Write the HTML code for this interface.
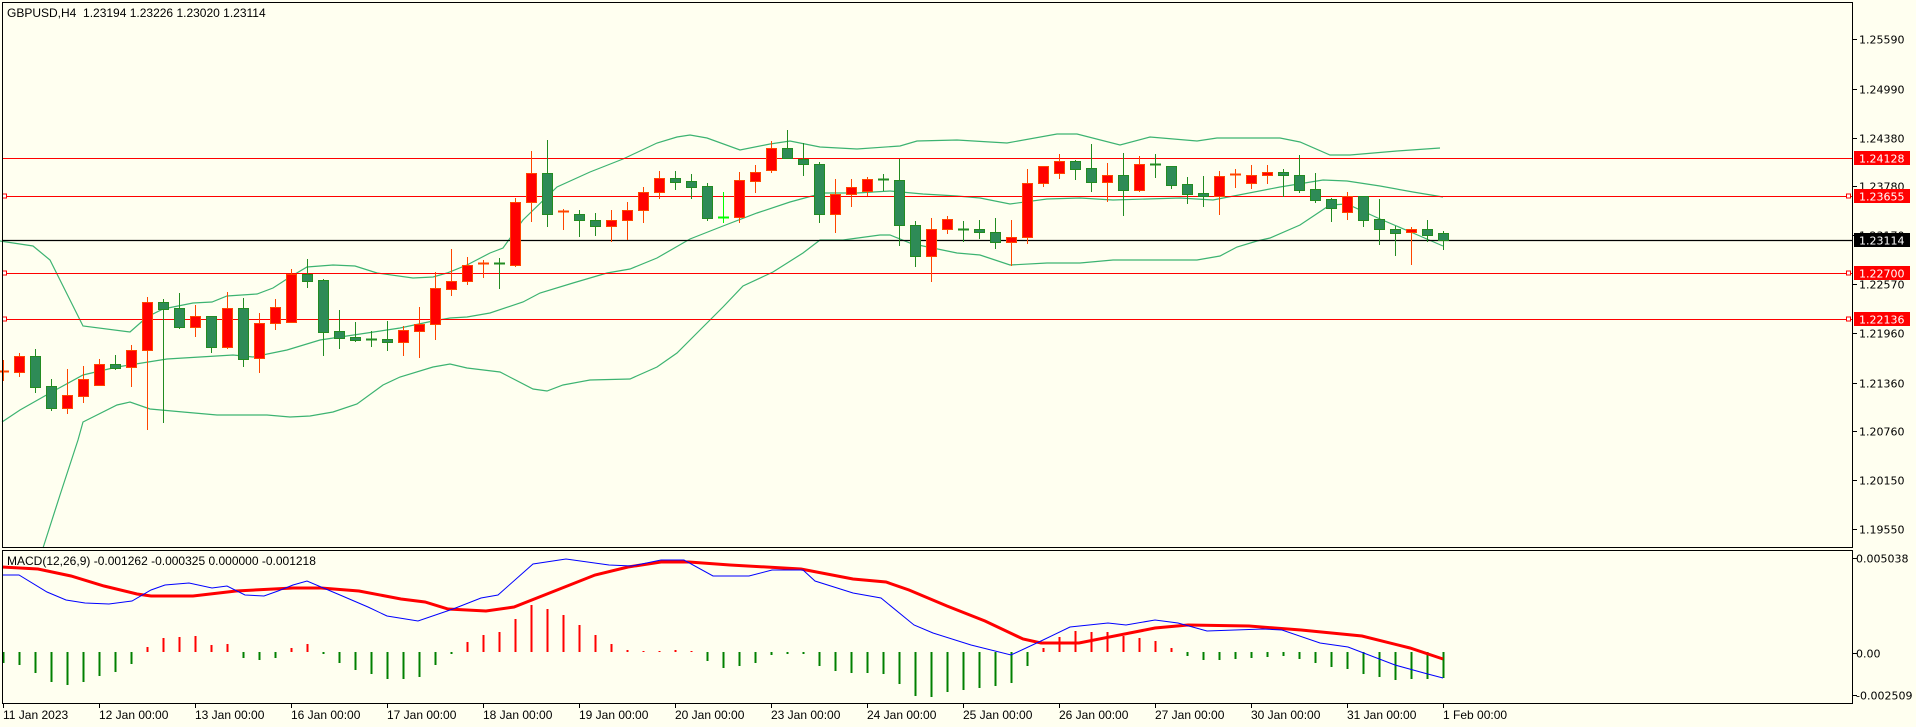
<!DOCTYPE html>
<html><head><meta charset="utf-8"><style>
html,body{margin:0;padding:0;background:#fffff0;width:1916px;height:727px;overflow:hidden}
svg{display:block}
</style></head><body>
<svg id="c" width="1916" height="727" xmlns="http://www.w3.org/2000/svg" font-family="Liberation Sans, sans-serif">
<rect width="1916" height="727" fill="#fffff0"/>
</svg>
<script>
(function(){
var s=document.getElementById('c'),o='';
function L(x1,y1,x2,y2,c,w){o+='<line x1="'+x1+'" y1="'+y1+'" x2="'+x2+'" y2="'+y2+'" stroke="'+c+'" stroke-width="'+(w||1)+'"/>';}
function P(pts,c,w){o+='<polyline fill="none" stroke="'+c+'" stroke-width="'+w+'" points="'+pts.map(function(p){return p[0]+','+p[1]}).join(' ')+'"/>';}
function T(x,y,t,sz,c,f,a){o+='<text x="'+x+'" y="'+y+'" font-size="'+sz+'" fill="'+c+'"'+(f?' font-family="'+f+'"':'')+(a?' text-anchor="'+a+'"':'')+'>'+t+'</text>';}
// bands
var up=[[0,241],[33,246],[50,260],[83,326],[130,332],[147,317],[163,309],[193,303],[212,302],[227,296],[257,294],[273,288],[290,277],[307,267],[333,265],[355,266],[377,273],[413,278],[433,277],[447,273],[467,265],[490,253],[503,248],[523,220],[557,187],[590,172],[623,159],[657,143],[677,137],[690,135],[707,138],[740,150],[770,144],[790,141],[820,147],[857,149],[900,146],[917,141],[957,140],[990,142],[1007,143],[1057,134],[1077,134],[1120,145],[1150,137],[1197,141],[1217,138],[1280,138],[1300,142],[1330,155],[1350,155],[1397,151],[1440,148]];
var mid=[[2,422],[20,410],[50,393],[83,375],[117,367],[167,359],[200,357],[233,355],[253,357],[287,350],[320,340],[367,333],[400,328],[433,321],[450,318],[467,317],[490,313],[523,302],[540,293],[573,283],[607,273],[630,269],[657,258],[690,239],[723,226],[757,213],[790,202],[823,193],[857,193],[890,191],[923,194],[957,196],[980,198],[1010,204],[1047,199],[1080,198],[1113,200],[1180,198],[1213,200],[1280,187],[1323,180],[1347,181],[1380,186],[1413,192],[1443,197]];
var lo=[[43,548],[60,495],[78,440],[83,422],[117,405],[130,402],[150,409],[183,412],[217,415],[267,415],[290,417],[310,416],[333,412],[357,404],[383,385],[400,377],[433,367],[450,364],[467,368],[500,372],[533,389],[547,391],[563,385],[590,380],[630,379],[657,367],[677,353],[697,333],[723,307],[743,286],[773,272],[803,253],[820,240],[843,240],[880,235],[890,235],[910,243],[923,246],[957,253],[980,255],[1010,265],[1047,263],[1080,263],[1113,260],[1197,260],[1220,256],[1237,247],[1257,241],[1270,238],[1300,225],[1330,205],[1347,204],[1380,219],[1413,233],[1443,246]];
P(up,'#3cb371',1.2);P(mid,'#3cb371',1.2);P(lo,'#3cb371',1.2);
// horizontal lines
[158,196,273,319].forEach(function(y){L(2,y+0.5,1852,y+0.5,'#ff0000',1);});
L(2,240.5,1852,240.5,'#000',1.2);
// candles [top,bot,hi,lo,col] in zoom units
var C=[[752,760,720,780,'r'],[709,755,699,768,'r'],[709,800,687,815,'g'],[799,863,777,870,'g'],[826,863,747,878,'r'],[778,827,738,846,'r'],[733,794,717,794,'r'],[733,743,705,748,'g'],[690,742,676,797,'r'],[547,691,531,926,'r'],[547,566,537,905,'g'],[565,620,519,623,'g'],[589,620,555,647,'r'],[589,680,589,695,'g'],[565,681,516,684,'r'],[565,716,534,737,'g'],[610,713,579,755,'r'],[562,610,538,626,'r'],[461,605,447,607,'r'],[461,482,416,500,'g'],[481,635,478,704,'g'],[634,654,570,683,'g'],[650,659,606,662,'g'],[657,659,634,677,'g'],[657,665,603,689,'g'],[631,665,619,704,'r'],[613,632,560,710,'r'],[505,613,456,656,'r'],[484,508,387,524,'r'],[436,484,410,493,'r'],[430,434,420,470,'r'],[430,434,413,503,'g'],
[247,434,234,437,'r'],[160,247,93,302,'r'],[160,281,60,317,'g'],[274,280,266,326,'r'],[283,301,270,347,'g'],[301,317,279,344,'g'],[301,317,270,362,'r'],[271,301,246,356,'r'],[217,271,201,305,'r'],[175,215,153,233,'r'],[175,185,153,206,'g'],[184,200,162,233,'g'],[199,293,189,299,'g'],[291,293,216,305,'l'],[181,290,156,305,'r'],[157,182,135,215,'r'],[85,149,63,155,'r'],[85,113,30,113,'g'],[118,133,69,164,'g'],[133,281,126,305,'g'],[223,281,177,335,'r'],[202,223,177,257,'r'],[178,212,170,224,'r'],[178,182,162,209,'g'],[181,316,116,374,'g'],[316,409,303,437,'g'],[328,409,294,482,'r'],[298,328,288,338,'r'],[327,329,303,364,'g'],[327,337,300,353,'g'],
[337,367,294,383,'g'],[352,367,300,436,'r'],[190,352,147,368,'r'],[139,190,139,197,'r'],[124,160,102,173,'r'],[124,146,120,176,'g'],[145,187,72,212,'g'],[166,187,129,243,'r'],[166,209,99,284,'g'],[133,209,108,212,'r'],[133,139,102,170,'g'],[139,194,139,203,'g'],[193,221,171,248,'g'],[220,228,168,257,'g'],[169,228,153,281,'r'],[163,166,147,200,'r'],[166,190,135,203,'r'],[157,166,135,188,'r'],[157,166,147,228,'g'],[166,209,105,215,'g'],[208,239,159,245,'g'],[238,265,235,302,'g'],[229,277,216,296,'r'],[229,299,229,317,'g'],[298,328,237,371,'g'],[328,338,318,404,'g'],[328,336,322,431,'r'],[328,344,299,362,'g'],[340,361,333,386,'g']];
C.forEach(function(c,k){
 var x=3+16*k,t=Math.round(c[0]/3+120),b=Math.round(c[1]/3+120),h=Math.round(c[2]/3+120),l=Math.round(c[3]/3+120);
 var wc=c[4]=='r'?'#ff4500':(c[4]=='g'?'#228b22':'#00ff00');
 var fc=c[4]=='r'?'#ff0000':(c[4]=='g'?'#2e8b57':'#00ff00');
 L(x+0.5,h,x+0.5,l+1,wc,1);
 if(b-t<=2){L(x-5,t+0.5,x+6,t+0.5,wc,2);}
 else o+='<rect x="'+(x-4.5)+'" y="'+(t+0.5)+'" width="10" height="'+(b-t)+'" fill="'+fc+'" stroke="'+wc+'" stroke-width="1"/>';
});
// small squares
[196,273,319].forEach(function(y){o+='<rect x="2.5" y="'+(y-2)+'" width="4" height="4" fill="#fff" stroke="#ff0000"/>';o+='<rect x="1846.5" y="'+(y-2)+'" width="4" height="4" fill="#fff" stroke="#ff0000"/>';});
// MACD histogram
var Z=652;
var H=[[345,'g'],[350,'g'],[375,'g'],[402,'g'],[410,'g'],[401,'g'],[383,'g'],[371,'g'],[348,'g'],[297,'r'],[270,'r'],[267,'r'],[264,'r'],[291,'r'],[288,'r'],[330,'g'],[335,'g'],[330,'g'],[300,'r'],[288,'r'],[318,'g'],[344,'g'],[365,'g'],[378,'g'],[392,'g'],[393,'g'],[386,'g'],[351,'g'],[317,'g'],[282,'r'],[261,'r'],[252,'r'],[213,'r'],[171,'r'],[183,'r'],[201,'r'],[231,'r'],[261,'r'],[288,'r'],[305,'r'],[309,'r'],[309,'r'],[306,'r'],[309,'r'],[338,'g'],[359,'g'],
[353,'g'],[345,'g'],[322,'g'],[318,'g'],[318,'g'],[353,'g'],[368,'g'],[374,'g'],[375,'g'],[377,'g'],[407,'g'],[443,'g'],[446,'g'],[431,'g'],[425,'g'],[419,'g'],[415,'g'],[404,'g'],[353,'g'],[300,'r'],[268,'r'],[250,'r'],[252,'r'],[252,'r'],[265,'r'],[270,'r'],[280,'r'],[300,'r'],[324,'g'],[337,'g'],[335,'g'],[332,'g'],[330,'g'],[326,'g'],[324,'g'],[332,'g'],[345,'g'],[358,'g'],[362,'g'],[377,'g'],[388,'g'],[397,'g'],[393,'g'],[392,'g'],[390,'g']];
H.forEach(function(h,k){var x=3+16*k+0.5,y=Math.round(548+h[0]/3);var y1=Math.min(y,Z),y2=Math.max(y,Z);if(y2-y1<1)y2=y1+1;L(x,y1,x,y2,h[1]=='r'?'#ff0000':'#008000',2);});
var sig=[[2,567],[38,569],[71,576],[104,586],[137,594],[151,596],[193,596],[236,591],[293,588],[321,588],[359,591],[401,599],[425,602],[448,609],[486,611],[514,607],[547,594],[595,575],[628,567],[661,562],[689,562],[730,565],[801,569],[853,579],[886,582],[909,590],[947,606],[985,621],[1023,639],[1041,643],[1079,643],[1155,628],[1188,625],[1249,626],[1301,630],[1362,636],[1410,648],[1443,659]];
var mac=[[2,575],[19,575],[47,592],[66,600],[85,603],[109,604],[132,601],[151,590],[165,585],[189,583],[212,588],[227,586],[245,595],[264,596],[278,591],[293,585],[307,581],[340,595],[368,607],[387,616],[418,621],[453,609],[481,598],[498,595],[533,564],[566,559],[609,565],[632,566],[661,560],[684,560],[713,576],[730,576],[749,576],[772,570],[803,570],[815,581],[853,593],[881,598],[914,625],[933,633],[971,645],[1011,655],[1041,641],[1070,627],[1108,623],[1126,625],[1155,620],[1178,623],[1207,631],[1263,629],[1282,630],[1320,643],[1348,647],[1395,665],[1424,673],[1443,678]];
P(sig,'#ff0000',3);P(mac,'#0000ff',1);
// borders
L(2,2.5,1852,2.5,'#000');L(2.5,2,2.5,548,'#000');L(2,547.5,1852,547.5,'#000');
L(2,550.5,1852,550.5,'#000');L(2.5,550,2.5,703,'#000');L(2,703.5,1852,703.5,'#000');
L(1852.5,2,1852.5,548,'#000');L(1852.5,550,1852.5,704,'#000');
// price axis
[['1.25590',39],['1.24990',89],['1.24380',138],['1.23780',186],['1.23170',235],['1.22570',284],['1.21960',333],['1.21360',383],['1.20760',431],['1.20150',480],['1.19550',529]].forEach(function(a){L(1852,a[1]+0.5,1857,a[1]+0.5,'#000');T(1859,a[1]+4.5,a[0],11,'#000','DejaVu Sans, sans-serif');});
[['1.24128',158,'#ff0000'],['1.23655',196,'#ff0000'],['1.23114',240,'#000000'],['1.22700',273,'#ff0000'],['1.22136',319,'#ff0000']].forEach(function(a){o+='<rect x="1854" y="'+(a[1]-7)+'" width="56" height="14" fill="'+a[2]+'"/>';T(1859,a[1]+4.5,a[0],11,'#fff','DejaVu Sans, sans-serif');});
[['0.005038',558],['0.00',653],['-0.002509',695]].forEach(function(a){L(1852,a[1]+0.5,1857,a[1]+0.5,'#000');T(1856,a[1]+4.5,a[0],11,'#000','DejaVu Sans, sans-serif');});
// time axis
var tl=['11 Jan 2023','12 Jan 00:00','13 Jan 00:00','16 Jan 00:00','17 Jan 00:00','18 Jan 00:00','19 Jan 00:00','20 Jan 00:00','23 Jan 00:00','24 Jan 00:00','25 Jan 00:00','26 Jan 00:00','27 Jan 00:00','30 Jan 00:00','31 Jan 00:00','1 Feb 00:00'];
tl.forEach(function(t,i){var x=3+96*i;L(x+0.5,703,x+0.5,708,'#000');T(x,719,t,12,'#000');});
T(7,17,'GBPUSD,H4&#160; 1.23194 1.23226 1.23020 1.23114',12,'#000');
T(7,565,'MACD(12,26,9) -0.001262 -0.000325 0.000000 -0.001218',12,'#000');
s.innerHTML+=o;
})();
</script>
</body></html>
